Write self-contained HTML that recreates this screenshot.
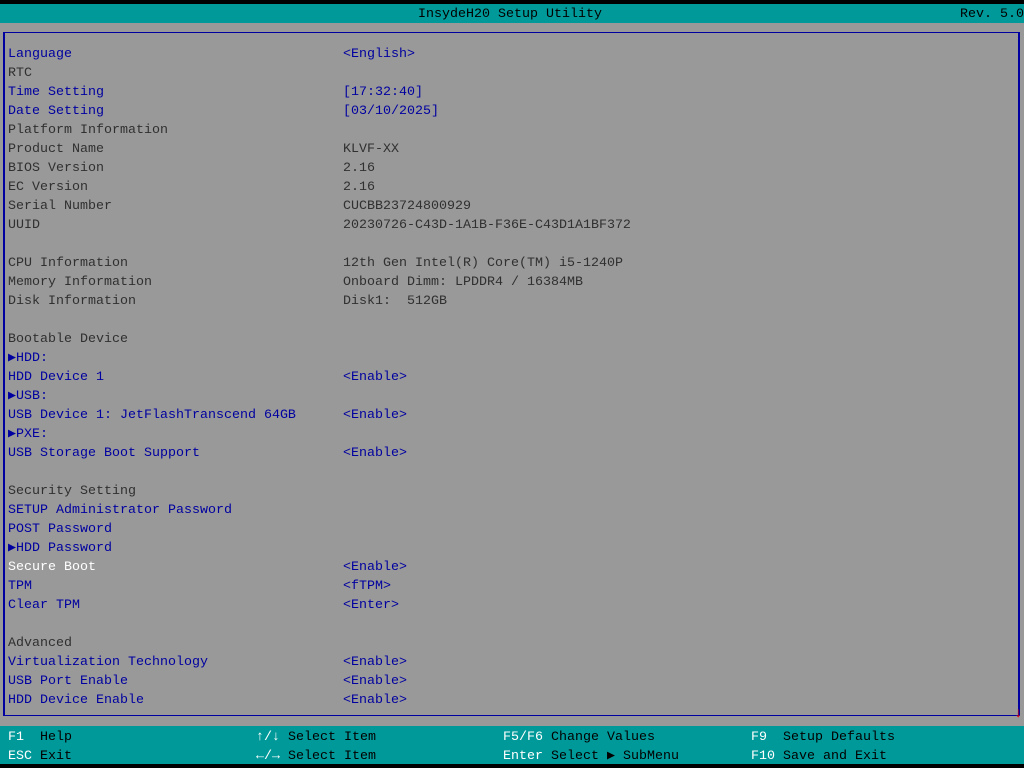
<!DOCTYPE html><html><head><style>
body{margin:0;width:1024px;height:768px;background:#000;position:relative;overflow:hidden;font-family:"Liberation Mono",monospace;font-size:13.33px;}
#top{position:absolute;left:0;top:4px;width:1024px;height:19px;background:#009999;}
#main{position:absolute;left:0;top:23px;width:1024px;height:703px;background:#999;}
#box{position:absolute;left:3px;top:32px;width:1013px;height:682px;border:2px solid #0000a0;border-top-width:1px;border-bottom-width:1px;}
#foot{position:absolute;left:0;top:726px;width:1024px;height:38px;background:#009999;}
.t{position:absolute;white-space:pre;line-height:19px;height:19px;}
.b{color:#0000a0}.g{color:#303030}.w{color:#fff}.k{color:#000}
</style></head><body>
<div id="top"></div><div id="main"></div><div id="box"></div><div id="foot"></div>
<div class="t k" style="left:418px;top:5px">InsydeH20 Setup Utility</div>
<div class="t k" style="left:960px;top:5px">Rev. 5.0</div>
<div id="rows"></div>
<div class="t" style="left:1014px;top:705px;color:#e00;font-size:14px;font-weight:bold">↓</div>
<div class="t w" style="left:8px;top:728px">F1</div><div class="t k" style="left:40px;top:728px">Help</div>
<div class="t w" style="left:8px;top:747px">ESC</div><div class="t k" style="left:40px;top:747px">Exit</div>
<div class="t w" style="left:256px;top:728px">↑/↓</div><div class="t k" style="left:288px;top:728px">Select Item</div>
<div class="t w" style="left:256px;top:747px">←/→</div><div class="t k" style="left:288px;top:747px">Select Item</div>
<div class="t w" style="left:503px;top:728px">F5/F6</div><div class="t k" style="left:551px;top:728px">Change Values</div>
<div class="t w" style="left:503px;top:747px">Enter</div><div class="t k" style="left:551px;top:747px">Select ▶ SubMenu</div>
<div class="t w" style="left:751px;top:728px">F9</div><div class="t k" style="left:783px;top:728px">Setup Defaults</div>
<div class="t w" style="left:751px;top:747px">F10</div><div class="t k" style="left:783px;top:747px">Save and Exit</div>
<script>
var R=[["b","Language","<English>"],["g","RTC",""],["b","Time Setting","[17:32:40]"],["b","Date Setting","[03/10/2025]"],["g","Platform Information",""],["g","Product Name","KLVF-XX"],["g","BIOS Version","2.16"],["g","EC Version","2.16"],["g","Serial Number","CUCBB23724800929"],["g","UUID","20230726-C43D-1A1B-F36E-C43D1A1BF372"],["g","",""],["g","CPU Information","12th Gen Intel(R) Core(TM) i5-1240P"],["g","Memory Information","Onboard Dimm: LPDDR4 / 16384MB"],["g","Disk Information","Disk1:  512GB"],["g","",""],["g","Bootable Device",""],["b","▶HDD:",""],["b","HDD Device 1","<Enable>"],["b","▶USB:",""],["b","USB Device 1: JetFlashTranscend 64GB","<Enable>"],["b","▶PXE:",""],["b","USB Storage Boot Support","<Enable>"],["g","",""],["g","Security Setting",""],["b","SETUP Administrator Password",""],["b","POST Password",""],["b","▶HDD Password",""],["w","Secure Boot","<Enable>"],["b","TPM","<fTPM>"],["b","Clear TPM","<Enter>"],["g","",""],["g","Advanced",""],["b","Virtualization Technology","<Enable>"],["b","USB Port Enable","<Enable>"],["b","HDD Device Enable","<Enable>"]];
var h="";R.forEach(function(r,i){var y=45+19*i;var vc=r[0]=="w"?"b":r[0];
function e(s){return s.replace(/</g,"&lt;").replace(/>/g,"&gt;");}
h+='<div class="t '+r[0]+'" style="left:8px;top:'+y+'px">'+e(r[1])+'</div><div class="t '+vc+'" style="left:343px;top:'+y+'px">'+e(r[2])+'</div>';});
document.getElementById("rows").innerHTML=h;
</script>
</body></html>
